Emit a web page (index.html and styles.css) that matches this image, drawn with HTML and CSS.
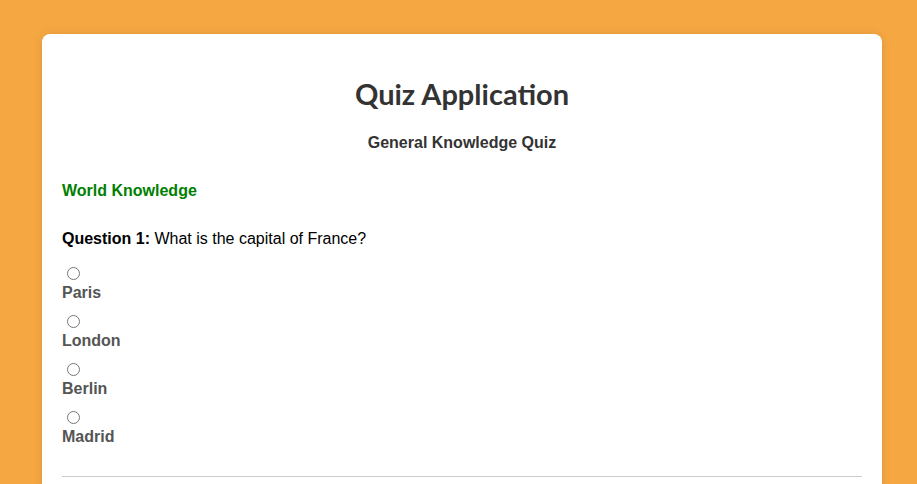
FILE: index.html
```html
<!DOCTYPE html>
<html>
<head>
<meta charset="utf-8">
<link rel="stylesheet" href="styles.css">
</head>
<body>
<div class="card">
  <h1 class="title">Quiz Application</h1>
  <h3 class="subtitle">General Knowledge Quiz</h3>
  <div class="category">World Knowledge</div>
  <div class="question"><strong>Question 1:</strong> What is the capital of France?</div>
  <div class="options">
    <div class="option"><input type="radio" name="q1" class="radio"><label class="opt-label">Paris</label></div>
    <div class="option"><input type="radio" name="q1" class="radio"><label class="opt-label">London</label></div>
    <div class="option"><input type="radio" name="q1" class="radio"><label class="opt-label">Berlin</label></div>
    <div class="option"><input type="radio" name="q1" class="radio"><label class="opt-label">Madrid</label></div>
  </div>
  <hr class="divider">
</div>
</body>
</html>
```
FILE: styles.css
```css
html, body {
  margin: 0;
  padding: 0;
}
body {
  background: #f5a742;
  font-family: "Liberation Sans", Arial, sans-serif;
  font-size: 16px;
  padding: 34px 35px 20px 42px;
}
.card {
  background: #fff;
  border-radius: 8px;
  padding: 20px 20px 40px;
  box-shadow: 0 0 10px rgba(0,0,0,0.1);
}
.title {
  font-family: "Lato", "Open Sans", sans-serif;
  font-weight: 700;
  font-size: 29px;
  color: #333;
  text-align: center;
  margin: 20px 0 0;
  line-height: 40px;
}
.subtitle {
  font-size: 16px;
  font-weight: 700;
  color: #333;
  text-align: center;
  margin: 20px 0 0;
  line-height: 18px;
}
.category {
  color: #008000;
  font-weight: 700;
  margin-top: 30px;
  line-height: 18px;
}
.question {
  color: #000;
  margin-top: 30px;
  line-height: 18px;
}
.options {
  margin-top: 19px;
}
.option {
  height: 48px;
}
.radio {
  display: block;
  margin: 0 0 0 5px;
  width: 13px;
  height: 13px;
}
.opt-label {
  display: block;
  font-weight: 700;
  color: #555;
  line-height: 18px;
  margin-top: 4px;
}
.divider {
  border: 0;
  border-top: 1px solid #ccc;
  margin: 17px 0 0;
}
```
